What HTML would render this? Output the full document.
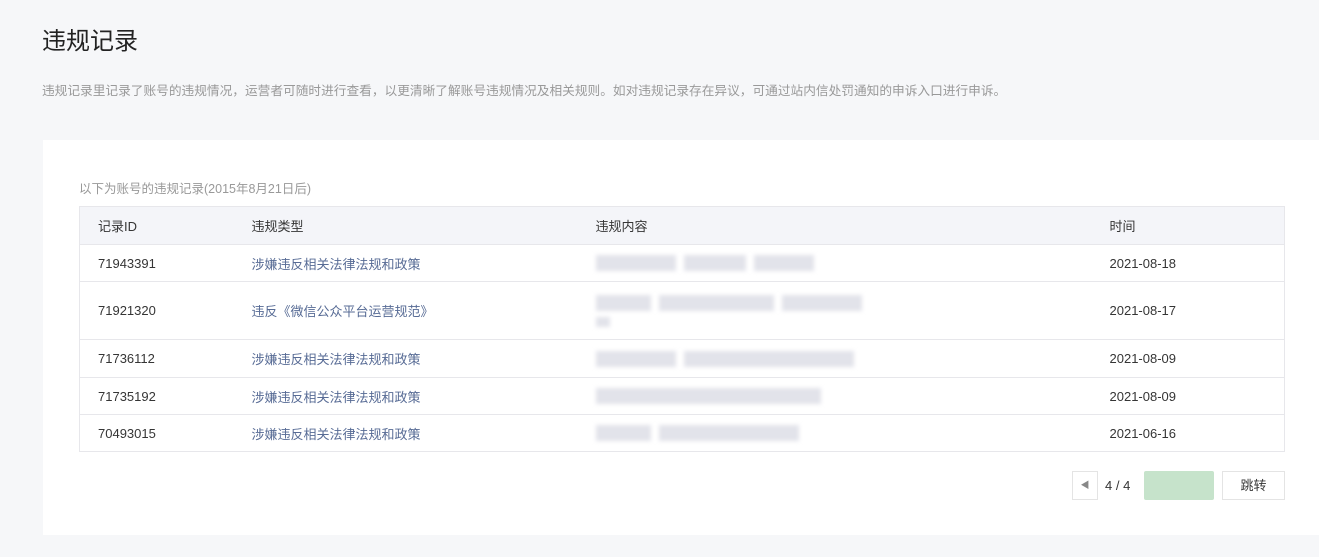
<!DOCTYPE html>
<html><head><meta charset="utf-8"><style>
*{margin:0;padding:0;box-sizing:border-box}
body{width:1319px;height:557px;background:#f6f7f9;font-family:"Liberation Sans","Noto Sans CJK SC",sans-serif;position:relative;overflow:hidden;color:#353535}
.abs{position:absolute}
h1{position:absolute;left:42px;top:21px;font-size:24px;font-weight:normal;color:#222}
.desc{left:42px;top:80px;font-size:12.7px;color:#999}
.card{left:43px;top:140px;width:1276px;height:395px;background:#fff}
.cap{left:79px;top:178px;font-size:12.5px;color:#999}
table{position:absolute;left:79px;top:206px;width:1206px;border-collapse:collapse;font-size:13px;border:1px solid #e7e7eb}
th{background:#f4f5f9;font-weight:normal;text-align:left;height:38px;color:#353535}
td{border-top:1px solid #e7e7eb;color:#353535}
th:nth-child(1),td:nth-child(1){padding-left:18px;width:172px}
th:nth-child(2),td:nth-child(2){width:344px}
th:nth-child(3),td:nth-child(3){width:514px}
td:nth-child(2){color:#576b95}
.b{display:inline-block;height:16px;background:#e2e3ea;filter:blur(2px);margin-right:8px;vertical-align:middle}
.btn{border:1px solid #e4e4e4;background:#fff;height:29px;top:471px;font-size:13px;text-align:center;line-height:27px}
</style></head><body>
<h1>违规记录</h1>
<div class="abs desc">违规记录里记录了账号的违规情况，运营者可随时进行查看，以更清晰了解账号违规情况及相关规则。如对违规记录存在异议，可通过站内信处罚通知的申诉入口进行申诉。</div>
<div class="abs card"></div>
<div class="abs cap">以下为账号的违规记录(2015年8月21日后)</div>
<table>
<tr><th>记录ID</th><th>违规类型</th><th>违规内容</th><th>时间</th></tr>
<tr style="height:37px"><td>71943391</td><td>涉嫌违反相关法律法规和政策</td><td><span class="b" style="width:80px"></span><span class="b" style="width:62px"></span><span class="b" style="width:60px"></span></td><td>2021-08-18</td></tr>
<tr style="height:58px"><td>71921320</td><td>违反《微信公众平台运营规范》</td><td><span class="b" style="width:55px"></span><span class="b" style="width:115px"></span><span class="b" style="width:80px"></span><br><span class="b" style="width:14px;height:10px;margin-top:6px"></span></td><td>2021-08-17</td></tr>
<tr style="height:38px"><td>71736112</td><td>涉嫌违反相关法律法规和政策</td><td><span class="b" style="width:80px"></span><span class="b" style="width:170px"></span></td><td>2021-08-09</td></tr>
<tr style="height:37px"><td>71735192</td><td>涉嫌违反相关法律法规和政策</td><td><span class="b" style="width:225px"></span></td><td>2021-08-09</td></tr>
<tr style="height:37px"><td>70493015</td><td>涉嫌违反相关法律法规和政策</td><td><span class="b" style="width:55px"></span><span class="b" style="width:140px"></span></td><td>2021-06-16</td></tr>
</table>
<div class="abs btn" style="left:1072px;width:26px;color:#888;font-size:9px">◀</div>
<div class="abs" style="left:1105px;top:478px;font-size:13px">4 / 4</div>
<div class="abs" style="left:1144px;top:471px;width:70px;height:29px;background:#c6e3cb;border-radius:2px"></div>
<div class="abs btn" style="left:1222px;width:63px">跳转</div>
</body></html>
